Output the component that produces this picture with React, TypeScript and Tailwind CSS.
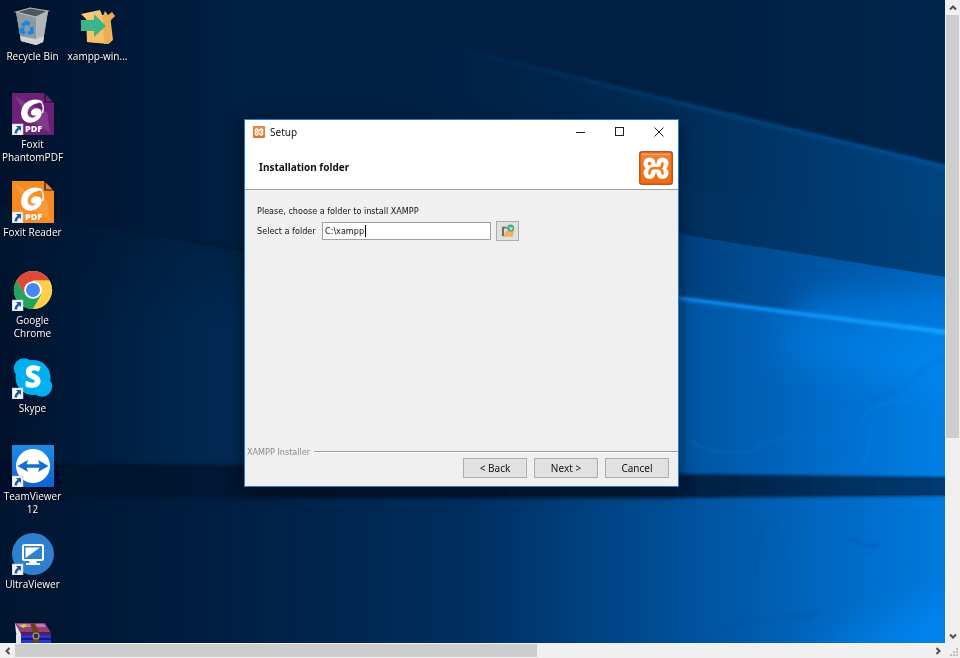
import { useState } from "react";
import type { ReactNode } from "react";

// Small blue arrow in the lower left corner of a shortcut
const ShortcutArrow = () => (
  <g>
    <rect x="0" y="31" width="11" height="11" fill="#f4f6f8" stroke="#b9c2cc" strokeWidth="0.6" />
    <path d="M4 33 H9 V38 L7.3 36.4 Q5 38 5 40.5 H2.6 Q2.4 37 5.6 34.7 Z" fill="#235a9e" />
  </g>
);

const RecycleBin = () => (
  <svg viewBox="0 0 42 42" className="size-full">
    <path d="M4 7 L30 9 L36 6 L31 37 L24 40 L9 36 Z" fill="#a9b0b7" />
    <path d="M4 7 L24 12 L24 40 L9 36 Z" fill="#8f989f" />
    <path d="M24 12 L36 6 L31 37 L24 40 Z" fill="#b0b6bb" />
    <path d="M8 31 L24 34 L32 31 L31 37 L24 40 L9 36 Z" fill="#cfd3d6" />
    <path d="M4 7 L18 3 L36 6 L24 12 Z" fill="#4f575e" stroke="#b3b9be" strokeWidth="1.2" />
    <g fill="none" stroke="#1687ea" strokeWidth="3.8">
      <path d="M10.5 21 L14 17.5 L18 19" />
      <path d="M19.5 22 L20 27 L16 28.5" />
      <path d="M13 28.5 L9.5 26 L11 22.5" />
    </g>
  </svg>
);

const XamppSetup = () => (
  <svg viewBox="0 0 42 42" className="size-full">
    <path d="M9 11 L25 10 L33 10 L36 35 L31 39 L10 37 Z" fill="#f3b95f" />
    <path d="M4 9 L23 5 L26 12 L9 14 Z" fill="#f7c877" />
    <path d="M25 13 L28 6 L31 10 L35 7 L38 11 L33 16 L34 37 L31 39 L27 39 Z" fill="#ecae55" />
    <path d="M10 12 L26 13 L27 38 L10 37 Z" fill="#f7c16b" />
    <path d="M4 15 H17 V9 L29 21 L17 32 V26 H4 Z" fill="#3cb489" />
  </svg>
);

const FoxitIcon = ({ color, shade }: { color: string; shade: string }) => (
  <svg viewBox="0 0 42 42" className="size-full">
    <path d="M0 0 H32 L42 10 V42 H0 Z" fill={color} />
    <path d="M3 3 L18 12 L35 19 L38 40 L16 26 Z" fill={shade} opacity="0.6" />
    <path d="M33 0 L42 9 H33 Z" fill={color} stroke="#0a1a35" strokeWidth="1.2" />
    <path
      d="M31 9 C24 4 12 7 9.500 17 C7.500 25 13 31 20 29.500 C27 28 31.500 22 29 17.500 C26.500 13.500 20 15 19 19 C18.500 22 21 23.500 24 22 C22 26.500 15.500 25 15.500 19.500 C16 13 23 10 31 9 Z"
      fill="#fff"
    />
    <path d="M28 8.500 Q33 12 30.500 20" fill="none" stroke="#fff" strokeWidth="1.4" />
    <text x="13" y="39" fontSize="9" fontWeight="800" fontFamily="'Open Sans', sans-serif" fill="#fff">
      PDF
    </text>
    <ShortcutArrow />
  </svg>
);

const ChromeIcon = () => (
  <svg viewBox="0 0 42 42" className="size-full">
    <circle cx="21" cy="21" r="19" fill="#fdd04b" />
    <path d="M4.5 11.5 A19 19 0 0 1 37.5 11.5 L21 11.5 L12.8 25.7 Z" fill="#dc4a3e" />
    <path d="M4.5 11.5 A19 19 0 0 0 21 40 L29.2 25.8 L12.8 25.8 Z" fill="#22a35f" />
    <path d="M37.5 11.5 A19 19 0 0 1 21 40 L29.2 25.8 L21 11.5 Z" fill="#fdd04b" />
    <circle cx="21" cy="21" r="8.8" fill="#fff" />
    <circle cx="21" cy="21" r="7" fill="#4688f2" />
    <ShortcutArrow />
  </svg>
);

const SkypeIcon = () => (
  <svg viewBox="0 0 42 42" className="size-full">
    <circle cx="21" cy="20.5" r="17.5" fill="#02aff0" />
    <circle cx="12" cy="11.5" r="10.2" fill="#02aff0" />
    <circle cx="30" cy="29.5" r="10.2" fill="#02aff0" />
    <text
      x="21"
      y="30"
      textAnchor="middle"
      fontSize="29"
      fontWeight="700"
      fontFamily="'Open Sans', sans-serif"
      fill="#fff"
      stroke="#fff"
      strokeWidth="1.4"
      strokeLinejoin="round"
    >
      S
    </text>
    <ShortcutArrow />
  </svg>
);

const TeamViewerIcon = () => (
  <svg viewBox="0 0 42 42" className="size-full">
    <defs>
      <linearGradient id="tv" x1="0" y1="0" x2="0" y2="1">
        <stop offset="0" stopColor="#1f8ae6" />
        <stop offset="1" stopColor="#0b66cc" />
      </linearGradient>
    </defs>
    <rect width="42" height="42" rx="1" fill="url(#tv)" />
    <circle cx="21" cy="21" r="17" fill="#fff" />
    <path d="M5.5 21 L16 15 L14.5 19.2 H27.5 L26 15 L36.5 21 L26 27 L27.5 22.8 H14.5 L16 27 Z" fill="#146fd0" />
    <ShortcutArrow />
  </svg>
);

const UltraViewerIcon = () => (
  <svg viewBox="0 0 42 42" className="size-full">
    <circle cx="21" cy="21" r="21" fill="#2f7fd0" />
    <rect x="11" y="12" width="20" height="15" rx="1.5" fill="#2f7fd0" stroke="#fff" strokeWidth="2" />
    <path d="M13.5 14.5 H28 L13.5 25 Z" fill="#fff" />
    <path d="M18 27 H24 L25 30 H28 V32 H14 V30 H17 Z" fill="#fff" />
    <ShortcutArrow />
  </svg>
);

const WinRarIcon = () => (
  <svg viewBox="0 0 42 42" className="size-full">
    <path d="M3 2 L33 2 L39 12 L9 13 Z" fill="#8f3f7c" />
    <path d="M5 3 L32 3 L34 6 L8 6 Z" fill="#c478ae" />
    <path d="M8 5 L12 3 L15 5 L11 7 Z" fill="#c2e03c" />
    <path d="M3 2 L9 13 V22 L4 12 Z" fill="#ece8e0" />
    <path d="M9 11 H39 V14 H9 Z" fill="#5a1d4d" />
    <path d="M9 14 H39 V22 H9 Z" fill="#2334d8" />
    <path d="M9 17 H39 V19 H9 Z" fill="#141c74" />
    <path d="M4 13 L9 15 V23 H4 Z" fill="#dfe3ea" />
    <path d="M18 2 H23 L27 12 V22 H21 V12 Z" fill="#6b431a" />
    <circle cx="24" cy="15" r="3" fill="#3a3226" stroke="#a59c86" strokeWidth="1.2" />
  </svg>
);

const XamppLogo = () => (
  <svg viewBox="0 0 34 34" className="size-full">
    <defs>
      <linearGradient id="xampp" x1="0" y1="0" x2="0" y2="1">
        <stop offset="0" stopColor="#f0813a" />
        <stop offset="0.5" stopColor="#f8761c" />
        <stop offset="1" stopColor="#ee6b12" />
      </linearGradient>
    </defs>
    <rect x="0.8" y="0.8" width="32.4" height="32.4" rx="2.5" fill="url(#xampp)" stroke="#b9581c" strokeWidth="1.6" />
    <path d="M3 3.5 H31" stroke="#f9a876" strokeWidth="1" />
    <g fill="#fff">
      <circle cx="10.5" cy="12.5" r="6" />
      <circle cx="23.5" cy="12.5" r="6" />
      <circle cx="10.5" cy="22" r="6" />
      <circle cx="23.5" cy="22" r="6" />
      <rect x="8" y="13" width="18" height="8.5" />
    </g>
    <g fill="none" stroke="#f8761c" strokeWidth="2.6" strokeLinecap="round">
      <path d="M10.5 22.5 Q10.5 18 13.5 17.2 H20 Q23.5 16.5 23.5 12.5" />
      <path d="M20 17.2 Q23.5 18 23.5 22.5" />
    </g>
    <circle cx="10.5" cy="12.5" r="1.8" fill="#f8761c" />
  </svg>
);

const FolderIcon = () => (
  <svg viewBox="0 0 16 16" className="size-[14px]">
    <path d="M1 14 V3 H6 L7 5 H3.5 V14 Z" fill="#6b6d70" />
    <path d="M2.5 14.5 L5.5 8 H7.5 L9 7 H15 L13.5 14.5 Z" fill="#f0b05c" />
    <circle cx="11" cy="4.5" r="4" fill="#3fae87" />
    <path d="M9 3 L12.5 6 M12.5 3.5 V6 H10" fill="none" stroke="#e6fff5" strokeWidth="1" />
  </svg>
);

const Wallpaper = () => (
  <svg
    viewBox="0 0 945 643"
    preserveAspectRatio="none"
    aria-hidden="true"
    className="absolute inset-0 size-full"
  >
    <defs>
      <linearGradient id="base" x1="0" y1="0" x2="1" y2="0">
        <stop offset="0" stopColor="#00122c" />
        <stop offset="0.25" stopColor="#001f42" />
        <stop offset="0.7" stopColor="#001f42" />
        <stop offset="1" stopColor="#00254c" />
      </linearGradient>
      <linearGradient id="mid" x1="0" y1="0" x2="1" y2="0">
        <stop offset="0" stopColor="#00254c" stopOpacity="0" />
        <stop offset="0.5" stopColor="#002b55" />
        <stop offset="1" stopColor="#004482" />
      </linearGradient>
      <linearGradient id="beam" x1="0" y1="0" x2="1" y2="0">
        <stop offset="0" stopColor="#002f60" stopOpacity="0" />
        <stop offset="0.5" stopColor="#00407e" />
        <stop offset="0.8" stopColor="#0058a8" />
        <stop offset="1" stopColor="#0066c0" />
      </linearGradient>
      <linearGradient id="pane" x1="0" y1="0" x2="1" y2="0">
        <stop offset="0" stopColor="#00122c" />
        <stop offset="0.2" stopColor="#00274f" />
        <stop offset="0.6" stopColor="#003a76" />
        <stop offset="0.74" stopColor="#0056a4" />
        <stop offset="0.9" stopColor="#0070d0" />
        <stop offset="1" stopColor="#0080e6" />
      </linearGradient>
      <linearGradient id="paneEdge" x1="0" y1="0" x2="0" y2="1">
        <stop offset="0" stopColor="#001833" />
        <stop offset="1" stopColor="#001833" stopOpacity="0" />
      </linearGradient>
      <linearGradient id="lower" x1="0" y1="0" x2="1" y2="0">
        <stop offset="0" stopColor="#001530" />
        <stop offset="0.25" stopColor="#001f44" />
        <stop offset="0.5" stopColor="#002f60" />
        <stop offset="0.72" stopColor="#00509a" />
        <stop offset="0.88" stopColor="#0068c2" />
        <stop offset="1" stopColor="#007ade" />
      </linearGradient>
      <linearGradient id="bar" x1="0" y1="0" x2="1" y2="0">
        <stop offset="0" stopColor="#00102a" />
        <stop offset="0.7" stopColor="#001c3c" />
        <stop offset="1" stopColor="#003c73" />
      </linearGradient>
      <linearGradient id="crest" x1="0" y1="0" x2="1" y2="0">
        <stop offset="0" stopColor="#0a4a86" stopOpacity="0" />
        <stop offset="0.5" stopColor="#0a4a86" stopOpacity="0.45" />
        <stop offset="1" stopColor="#07509a" stopOpacity="0.8" />
      </linearGradient>
      <linearGradient id="ray" x1="0" y1="0" x2="1" y2="0">
        <stop offset="0" stopColor="#0b86f4" stopOpacity="0.8" />
        <stop offset="1" stopColor="#0aa4ff" />
      </linearGradient>
      <filter id="soft" filterUnits="userSpaceOnUse" x="-20" y="-20" width="1000" height="700">
        <feGaussianBlur stdDeviation="1.5" />
      </filter>
      <filter id="haze" filterUnits="userSpaceOnUse" x="-100" y="-100" width="1200" height="900">
        <feGaussianBlur stdDeviation="18" />
      </filter>
      <clipPath id="beamArea">
        <path d="M420 200 L680 234 L945 277 V331 L680 297 L420 270 Z" />
      </clipPath>
    </defs>
    <rect width="945" height="643" fill="url(#base)" />
    <path d="M380 30 L945 165 V480 H380 Z" fill="url(#mid)" />
    <path d="M420 150 L680 186 L945 220 V277 L680 234 Z" fill="#003a72" opacity="0.15" />
    <path d="M420 200 L680 234 L945 277 V340 H420 Z" fill="url(#beam)" />
    <g clipPath="url(#beamArea)">
      <path d="M800 300 L1000 295 V340 L800 330 Z" fill="#0084f0" opacity="0.8" filter="url(#haze)" />
    </g>
    <path d="M0 210 L245 252 L680 297 L945 330 V478 H0 Z" fill="url(#pane)" />
    <path d="M0 205 L245 248 V330 H0 Z" fill="url(#paneEdge)" opacity="0.6" />
    <path d="M780 330 L960 350 V390 L780 350 Z" fill="#008cf8" opacity="0.6" filter="url(#haze)" />
    <path d="M0 495 H945 V643 H0 Z" fill="url(#lower)" />
    <path d="M-10 463 L300 465 L680 474 L955 477 V496 L680 498 H-10 Z" fill="url(#bar)" filter="url(#soft)" />
    <path d="M440 44 L680 103 L950 168" fill="none" stroke="url(#crest)" strokeWidth="5" filter="url(#soft)" />
    <path d="M678 297 L948 331 L948 334 L678 299 Z" fill="url(#ray)" stroke="url(#ray)" strokeWidth="2" filter="url(#soft)" />
    <path d="M800 660 L960 590 V660 Z" fill="#008cff" opacity="0.6" filter="url(#haze)" />
    <g fill="none" filter="url(#soft)">
      <path d="M945 355 C915 370 915 390 880 397 Q862 405 860 420" stroke="#0062bd" strokeWidth="3" opacity="0.25" />
      <path d="M910 402 Q870 400 862 420 M870 425 Q872 450 860 465" stroke="#0a8cf2" strokeWidth="3" opacity="0.35" />
      <path d="M690 440 Q710 456 750 452 Q780 430 810 440 T850 448" stroke="#0a74cf" strokeWidth="3" opacity="0.3" />
      <path d="M850 538 Q862 548 880 544" stroke="#0056a8" strokeWidth="2" opacity="0.6" />
      <path d="M756 580 Q755 520 770 525 T782 560" stroke="#004e97" strokeWidth="4" opacity="0.2" />
      <path d="M705 638 Q740 620 780 618 T820 610" stroke="#004b92" strokeWidth="4" opacity="0.25" />
    </g>
  </svg>
);

const desktopColumns: { name: string; label?: string; icon: ReactNode }[][] = [
  [
    { name: "Recycle Bin", label: "Recycle Bin", icon: <RecycleBin /> },
    { name: "Foxit PhantomPDF", label: "Foxit PhantomPDF", icon: <FoxitIcon color="#6d2077" shade="#8d4a95" /> },
    { name: "Foxit Reader", label: "Foxit Reader", icon: <FoxitIcon color="#f68b1f" shade="#f9a54c" /> },
    { name: "Google Chrome", label: "Google Chrome", icon: <ChromeIcon /> },
    { name: "Skype", label: "Skype", icon: <SkypeIcon /> },
    { name: "TeamViewer", label: "TeamViewer 12", icon: <TeamViewerIcon /> },
    { name: "UltraViewer", label: "UltraViewer", icon: <UltraViewerIcon /> },
    { name: "WinRAR", icon: <WinRarIcon /> },
  ],
  [{ name: "XAMPP installer", label: "xampp-win...", icon: <XamppSetup /> }],
];

const DesktopIcons = () => (
  <div className="relative flex pt-[5px]">
    {desktopColumns.map((column, index) => (
      <div key={index} className="flex w-[65px] flex-col">
        {column.map((item) => (
          <button
            key={item.name}
            type="button"
            aria-label={item.name}
            className="flex h-[88px] shrink-0 flex-col items-center gap-[3px]"
          >
            <span className="block size-[42px] shrink-0">{item.icon}</span>
            {item.label && (
              <span className="font-['Open_Sans',sans-serif] text-[10px] leading-[13px] text-white [text-shadow:1px_1px_2px_#000]">
                {item.label}
              </span>
            )}
          </button>
        ))}
      </div>
    ))}
  </div>
);

const windowButton = "flex h-6 w-[39px] items-center justify-center";
const dialogButton =
  "h-5 w-16 border border-[#adadad] bg-[#e1e1e1] text-center font-['Noto_Sans',sans-serif] text-[10px] leading-none text-[#111]";

const SetupDialog = () => {
  const [folder, setFolder] = useState("C:\\xampp");

  return (
    <section
      aria-label="Setup"
      className="absolute left-[244px] top-[119px] flex w-[435px] flex-col border border-[#1883d7] bg-[#f0f0f0] font-['DejaVu_Sans_Condensed','Noto_Sans',sans-serif] text-[9px] text-[#111] shadow-[0_4px_14px_rgba(0,0,0,0.6)]"
    >
      <header className="border-b border-[#a0a0a0] bg-white font-['Noto_Sans',sans-serif]">
        <div className="flex h-6 items-center pl-2">
          <span className="block size-3">
            <XamppLogo />
          </span>
          <h1 className="ml-[5px] flex-1 text-[10px]">Setup</h1>
          <button type="button" aria-label="Minimize" className={windowButton}>
            <svg viewBox="0 0 10 10" className="size-[10px]" stroke="#222" fill="none">
              <path d="M0 5.5 H9" />
            </svg>
          </button>
          <button type="button" aria-label="Maximize" className={windowButton}>
            <svg viewBox="0 0 10 10" className="size-[10px]" stroke="#222" fill="none">
              <rect x="0.5" y="0.5" width="8" height="8" />
            </svg>
          </button>
          <button type="button" aria-label="Close" className={windowButton}>
            <svg viewBox="0 0 10 10" className="size-[10px]" stroke="#222" fill="none">
              <path d="M0.5 0.5 L9.5 9.5 M9.5 0.5 L0.5 9.5" />
            </svg>
          </button>
        </div>
        <div className="flex h-[45px] items-center justify-between pl-[14px] pr-[5px] pt-[2px]">
          <h2 className="text-[10px] font-bold">Installation folder</h2>
          <span className="block size-[34px]">
            <XamppLogo />
          </span>
        </div>
      </header>

      <div className="h-[256px] px-3 pt-[13px]">
        <p className="leading-4">Please, choose a folder to install XAMPP</p>
        <div className="mt-[2px] flex h-5 items-center">
          <label htmlFor="folder" className="w-[65px] whitespace-nowrap leading-4">
            Select a folder
          </label>
          <span className="relative">
            <input
              id="folder"
              type="text"
              value={folder}
              onChange={(e) => setFolder(e.target.value)}
              className="block h-[18px] w-[169px] border border-[#a0a0a0] bg-white px-[2px] outline-none"
            />
            <span className="absolute left-[43px] top-[3px] h-3 w-px bg-black" />
          </span>
          <button
            type="button"
            aria-label="Browse"
            className="ml-[5px] flex h-5 w-[23px] items-center justify-center border border-[#adadad] bg-[#e1e1e1]"
          >
            <FolderIcon />
          </button>
        </div>
      </div>

      <footer className="pb-2">
        <div className="flex h-3 items-center gap-1 pl-[2px] text-[#8a8a8a]">
          <span className="leading-3">XAMPP Installer</span>
          <span className="h-[2px] flex-1 border-t border-[#a0a0a0] bg-white" />
        </div>
        <div className="flex justify-end gap-[7px] pr-[9px]">
          <button type="button" className={dialogButton}>
            &lt; Back
          </button>
          <button type="button" className={dialogButton}>
            Next &gt;
          </button>
          <button type="button" className={dialogButton}>
            Cancel
          </button>
        </div>
      </footer>
    </section>
  );
};

const arrows = {
  up: "M2 6.5 L5 3.5 L8 6.5",
  down: "M2 3.5 L5 6.5 L8 3.5",
  left: "M6.5 2 L3.5 5 L6.5 8",
  right: "M3.5 2 L6.5 5 L3.5 8",
};

const ScrollArrow = ({ direction }: { direction: keyof typeof arrows }) => (
  <button
    type="button"
    aria-label={`Scroll ${direction}`}
    className="flex size-[15px] shrink-0 items-center justify-center"
  >
    <svg viewBox="0 0 10 10" className="size-[10px]" fill="none" stroke="#505050" strokeWidth="2">
      <path d={arrows[direction]} />
    </svg>
  </button>
);

export default function App() {
  return (
    <div className="grid h-screen w-full grid-cols-[minmax(0,1fr)_15px] grid-rows-[minmax(0,1fr)_15px] bg-[#f0f0f0]">
      <main className="relative overflow-hidden bg-[#001f42]">
        <Wallpaper />
        <DesktopIcons />
        <SetupDialog />
      </main>

      {/* Vertical scrollbar */}
      <div className="flex min-h-0 flex-col">
        <ScrollArrow direction="up" />
        <div className="min-h-0 flex-1 px-px">
          <div className="h-[69%] bg-[#cdcdcd]" />
        </div>
        <ScrollArrow direction="down" />
      </div>

      {/* Horizontal scrollbar */}
      <div className="flex min-w-0">
        <ScrollArrow direction="left" />
        <div className="min-w-0 flex-1 py-px">
          <div className="h-full w-[57%] bg-[#cdcdcd]" />
        </div>
        <ScrollArrow direction="right" />
      </div>

      <svg viewBox="0 0 15 15" className="size-[15px]" fill="#bdbdbd">
        <path d="M11 5h2v2h-2zM8 8h2v2H8zM11 8h2v2h-2zM5 11h2v2H5zM8 11h2v2H8zM11 11h2v2h-2z" />
      </svg>
    </div>
  );
}
